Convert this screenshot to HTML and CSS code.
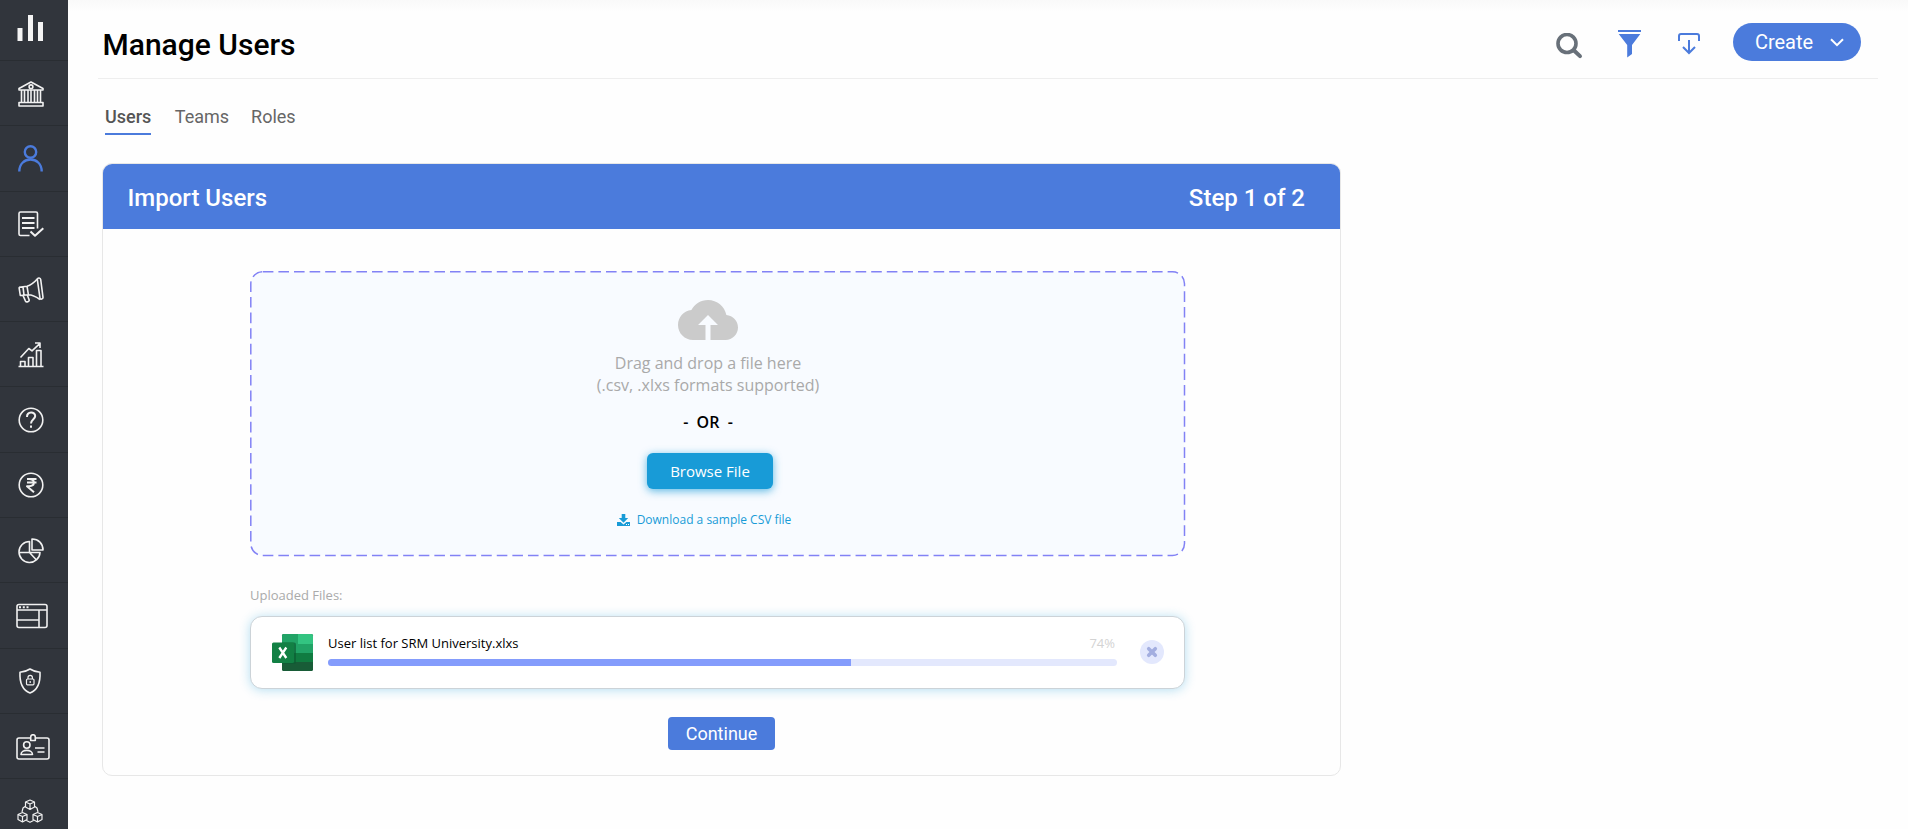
FILE: index.html
```html
<!DOCTYPE html>
<html lang="en">
<head>
<meta charset="utf-8">
<title>Manage Users</title>
<link rel="stylesheet" href="styles.css">
</head>
<body>
<div class="app">
  <nav class="sidebar">
    <a class="nav-item nav-logo"><svg width="27" height="27" viewBox="0 0 27 27"><path fill="#f4f4f4" d="M.5 13h5v13h-5zM11 0h5v26h-5zM21 7h5v19h-5z"/></svg></a>
    <a class="nav-item"><svg class="ico" width="26" height="26" viewBox="0 0 26 26"><path d="M1 9V7.500L13 1l12 6.500V9zM1 25v-3.500h24V25zM3.500 9.500v11.500M6.500 9.500v11.500M10 9.500v11.500M13 9.500v11.500M16.500 9.500v11.500M19.500 9.500v11.500M22.500 9.500v11.500"/><circle cx="13" cy="5.800" r="1.900"/></svg></a>
    <a class="nav-item"><svg class="ico active" width="26" height="27" viewBox="0 0 26 27"><circle cx="12.500" cy="7" r="5.700"/><path d="M1.300 26.500C1.300 10.500 23.700 10.500 23.700 26.500"/></svg></a>
    <a class="nav-item"><svg class="ico" width="26" height="26" viewBox="0 0 26 26"><path d="M11.500 24.500H2.500a1.500 1.500 0 0 1-1.500-1.500V2.500A1.500 1.500 0 0 1 2.500 1h15.500a1.500 1.500 0 0 1 1.500 1.500v15"/><path class="bold" d="M4 7h12.500M4 12h12.500M4 17h12.500M12.500 20.500l4.500 4.300 8.300-7.500"/></svg></a>
    <a class="nav-item"><svg class="ico" width="26" height="26" viewBox="0 0 26 26"><path d="M1 10.200l8-1c4-1 7-3.400 10.500-7.400M1 10.200l1.300 8.300 8.200-.8c4.500 0 7.500 2 11.500 4.800M5 9.800l1 8.200M9 9.200l1.400 8.500M5 18.500l2.500 5.600c.8 1.500 4.300.6 3.600-1.300L9.300 18"/><path d="M19.300 2.300c.4-2 3.200-1.500 3.400.2L25 20.300c.2 2-2.700 2.500-3 .8z"/></svg></a>
    <a class="nav-item"><svg class="ico" width="26" height="26" viewBox="0 0 26 26"><path d="M.5 24.500h25M2.500 24v-4.500h4.500V24M10.500 24v-8.500h4.500V24M18.500 24V8.500h4.500V24M2.500 15.500l8.300-9 3.200 2.300 7.500-7M17 1h5v5"/></svg></a>
    <a class="nav-item"><svg class="ico" width="26" height="26" viewBox="0 0 26 26"><circle cx="13" cy="13" r="11.800"/><path class="bold" d="M9 10c0-6 8.200-5.500 8.200-1 0 3-4.200 3.500-4.200 7.500M13 18.500v2.300"/></svg></a>
    <a class="nav-item"><svg class="ico" width="26" height="26" viewBox="0 0 26 26"><circle cx="13" cy="13" r="11.800"/><path class="bold" d="M9 7h9.500M9 10.600h9.500M11 7c6.500 0 6.500 7.200 0 7.200H9l7 6"/></svg></a>
    <a class="nav-item"><svg class="ico" width="26" height="26" viewBox="0 0 26 26"><path d="M11.500 3.500a10.500 10.500 0 1 0 10.500 11H11.500zM1 14.500h10.500l7 7.500M14 1v11h11C25 5.500 20.500 1 14 1z"/></svg></a>
    <a class="nav-item"><svg class="ico" width="32" height="26" viewBox="0 0 32 26"><rect x="1" y="1.500" width="30" height="23" rx="2"/><path d="M1 7h30M23 7v17.500M1 17h22"/><path class="bold" d="M3 4.300h2M6.800 4.300h2M10.500 4.300h2"/></svg></a>
    <a class="nav-item"><svg class="ico" width="26" height="26" viewBox="0 0 26 26"><path d="M13 1c3 2 6.300 3 10 3.200C23.500 14 20.500 22 13 25 5.500 22 2.500 14 3 4.200 6.700 4 10 3 13 1z"/><rect class="thin" x="9.500" y="11" width="7.500" height="5.800" rx="1"/><path class="thin" d="M11 11V9.500a2.200 2.200 0 0 1 4.400 0V11M13.200 13v2"/></svg></a>
    <a class="nav-item"><svg class="ico" width="34" height="26" viewBox="0 0 34 26"><path d="M14.500 4H3a2 2 0 0 0-2 2v17a2 2 0 0 0 2 2h28a2 2 0 0 0 2-2V6a2 2 0 0 0-2-2H19.500M14.700 6.500V3a2.300 2.300 0 0 1 4.600 0v3.500zM5 20.500c0-5.500 11.500-5.500 11.500 0zM19 14h9.500M21.500 18h7"/><circle cx="10.800" cy="11" r="3.200"/></svg></a>
    <a class="nav-item"><svg class="ico" width="26" height="26" viewBox="0 0 26 26"><path class="thin" d="M13 1l4.500 2v5L13 10.500 8.500 8V3zM8.500 3L13 5l4.500-2M13 5v5.500M5.500 13.500l4.500 2v5L5.500 23 1 20.500v-5zM1 15.500l4.500 2 4.500-2M5.500 17.500V23M20.500 13.500l4.500 2v5L20.500 23 16 20.500v-5zM16 15.500l4.500 2 4.500-2M20.500 17.500V23M8 7.500l-2 1.500-1 4M18 7.500L20 9l1 4M9.500 21.500l3.500 1.800 3.500-1.800"/></svg></a>
  </nav>
  <main class="main">
    <header class="topbar">
      <h1 class="title">Manage Users</h1>
      <div class="actions">
        <svg class="act-search" width="27" height="27" viewBox="0 0 27 27" fill="none" stroke="#687079"><circle cx="11" cy="10.500" r="9" stroke-width="3.600"/><path d="M18 17.500l6 5.600" stroke-width="4" stroke-linecap="round"/></svg>
        <svg class="act-filter" width="23" height="28" viewBox="0 0 23 28" fill="#4b7bdc"><path d="M0 0h23v2H0zM.7 4h21.600L14 15v9l-4.800 3.500V15z"/></svg>
        <svg class="act-import" width="22" height="22" viewBox="0 0 22 22" fill="none" stroke="#4b7bdc" stroke-width="2"><path d="M1 8V3q0-2 2-2h16q2 0 2 2v5M11 7v13M5 14l6 6 6-6"/></svg>
        <button class="create"><span>Create</span><svg width="14" height="9" viewBox="0 0 14 9" fill="none" stroke="#fff" stroke-width="2"><path d="M1 1.200l6 6 6-6"/></svg></button>
      </div>
    </header>
    <div class="tabs"><a class="tab tab-active">Users</a><a class="tab">Teams</a><a class="tab">Roles</a></div>
    <section class="card">
      <div class="card-head"><span>Import Users</span><span class="step">Step 1 of 2</span></div>
      <div class="card-body">
        <div class="drop">
          <svg class="drop-outline" width="936" height="286"><rect x=".8" y=".8" width="933.700" height="283.700" rx="12" fill="#f8fbff" stroke="#8282f5" stroke-width="1.500" stroke-dasharray="10.600 5"/></svg>
          <svg class="cloud" width="60" height="40" viewBox="0 4 24 16"><path fill="#cbcbcb" d="M19.350 10.040C18.670 6.590 15.640 4 12 4 9.110 4 6.600 5.640 5.350 8.040 2.340 8.360 0 10.910 0 14c0 3.310 2.690 6 6 6h5v-6H8l4-4 4 4h-3v6h6c2.760 0 5-2.240 5-5 0-2.640-2.050-4.780-4.650-4.960z"/></svg>
          <p class="hint">Drag and drop a file here<br><span>(.csv, .xlxs formats supported)</span></p>
          <p class="or">-&nbsp; OR &nbsp;-</p>
          <button class="browse">Browse File</button>
          <a class="sample"><svg width="13" height="12" viewBox="0 0 13 12" fill="#189bd7"><path d="M4.700 0h3.600v4h2.900L6.500 8.700 1.800 4h2.900z"/><path d="M0 8h3.600l2.900 2.600L9.400 8H13v4H0z"/><path fill="#fff" d="M9 10h1v1H9zM11 10h1v1h-1z"/></svg><span>Download a sample CSV file</span></a>
        </div>
        <div class="files-label"><span>Uploaded Files:</span></div>
        <div class="file">
          <svg class="excel" width="42" height="38" viewBox="0 0 42 38"><rect x="10" width="31" height="37" rx="1.500" fill="#185c37"/><path d="M11.500 0H26v10H10V1.500Q10 0 11.500 0zM26 10h15v9H26z" fill="#21a366"/><path d="M26 0h13.500Q41 0 41 1.500V10H26z" fill="#33c481"/><path d="M10 10h16v18H10zM26 19h15v9H26z" fill="#107c41"/><path d="M10 10h16v9H10z" fill="#21a366"/><path d="M10 8.500h12q2 0 2 2V28q0 2-2 2H10z" fill="#0c5a32" opacity=".65"/><rect y="8.500" width="22" height="20.500" rx="1.500" fill="#128044"/><path d="M7.300 13.500l7 10.500M14.300 13.500l-7 10.500" stroke="#fff" stroke-width="2.300"/></svg>
          <div class="progress">
            <div class="file-row"><span class="name">User list for SRM University.xlxs</span><span class="pct">74%</span></div>
            <div class="track"><div class="fill"></div></div>
          </div>
          <button class="remove"><svg width="12" height="12" viewBox="0 0 12 12"><path d="M2.700 2.700l6.600 6.600M9.300 2.700l-6.600 6.600" stroke="#a3aee0" stroke-width="3.600" stroke-linecap="round"/></svg></button>
        </div>
        <button class="continue">Continue</button>
      </div>
    </section>
  </main>
</div>
</body>
</html>
```
FILE: styles.css
```css
* { box-sizing: border-box; }
body { margin: 0; font-family: Roboto, sans-serif; background: #fefefe; overflow: hidden; }
h1, p { margin: 0; font-weight: inherit; }
button { border: 0; padding: 0; font: inherit; color: inherit; display: flex; align-items: center; justify-content: center; }
svg { display: block; flex: none; }
.app { display: flex; height: 829px; overflow: hidden; }
.sidebar { width: 68px; flex: none; background: #31353c; overflow: hidden; }
.nav-item { display: flex; align-items: center; height: 65.300px; padding: 1px 0 0 17.500px; border-bottom: 1px solid #292d32; }
.nav-logo { height: 61px; padding: 0 0 4px 17px; }
.nav-item:nth-child(n+10) { padding-left: 15.500px; }
.nav-item:nth-child(11), .nav-item:nth-child(13) { padding-left: 17px; }
.ico { fill: none; stroke: #f1f1f1; stroke-width: 1.600; stroke-linejoin: round; }
.ico.active { stroke: #4b7bdc; stroke-width: 2.400; }
.ico .bold { stroke-width: 2; }
.ico .thin { stroke-width: 1.200; }

.main { flex: 1; padding: 0 30px; background: linear-gradient(#f9f9f9, #fefefe 12px); }
.topbar { height: 79px; display: flex; justify-content: space-between; padding: 0 17px 0 4.500px; border-bottom: 1px solid #eee; }
.title { font-size: 30px; line-height: 36px; font-weight: 500; color: #000; margin-top: 27px; }
.actions { display: flex; align-items: flex-start; }
.act-search { margin: 33px 35px 0 0; }
.act-filter { margin: 30px 37px 0 0; }
.act-import { margin: 33px 33px 0 0; }
.create { width: 128px; height: 38px; margin-top: 23px; border-radius: 19px; background: #4b7bdc; color: #fff; font-size: 20px; gap: 17px; padding-left: 5px; }

.tabs { display: flex; height: 84px; padding: 25px 0 0 7px; font-size: 18px; line-height: 26px; color: #666; }
.tab { height: 31px; margin-right: 23.500px; }
.tab-active { color: #555; font-weight: 500; border-bottom: 2px solid #4b7bdc; }
.tab + .tab + .tab { margin-left: -1.500px; }

.card { width: 1239px; height: 613px; margin-left: 4px; border: 1px solid #e7e7e7; border-radius: 10px; overflow: hidden; background: #fefefe; }
.card-head { height: 65px; padding: 2px 35px 0 24.500px; background: #4b7bdc; color: #fff; font-size: 24px; font-weight: 500; display: flex; justify-content: space-between; align-items: center; }
.card-body { padding: 42px 155px 0 147px; display: flex; flex-direction: column; }
.drop { width: 936px; height: 286px; position: relative; display: flex; flex-direction: column; align-items: center; padding: 29px 20px 0 0; font-family: "Open Sans", sans-serif; }
.drop-outline { position: absolute; left: 0; top: 0; }
.drop > :not(.drop-outline) { position: relative; }
.hint { margin-top: 12px; font-size: 16px; line-height: 22px; color: #a9a9a9; text-align: center; }
.or { margin-top: 15px; font-size: 16px; line-height: 22px; font-weight: 600; color: #000; }
.browse { width: 126px; height: 36px; margin: 20px 0 0 4px; padding-bottom: 1px; border-radius: 6px; background: #189bd7; color: #fff; font-size: 15px; box-shadow: 0 2px 9px rgba(24,155,215,.7); }
.sample { display: flex; align-items: center; gap: 7px; margin: 22px 8px 0 0; font-size: 12px; line-height: 18px; color: #189bd7; }
.files-label { height: 59px; padding-top: 29px; font: 13px/18px "Open Sans", sans-serif; color: #aaa; }
.file { width: 935px; height: 73px; display: flex; align-items: center; padding-left: 21px; border: 1px solid #ccd3d8; border-radius: 12px; background: #fff; box-shadow: 0 1px 11px rgba(24,155,215,.32); font-family: "Open Sans", sans-serif; }
.progress { width: 789px; margin: 0 0 5px 14px; }
.file-row { display: flex; justify-content: space-between; padding-right: 2px; font-size: 13px; line-height: 18px; }
.name { color: #000; font-weight: 500; }
.pct { color: #d3d3d3; }
.track { height: 7px; margin-top: 7px; border-radius: 4px; background: #e3e8fd; overflow: hidden; }
.fill { width: 523px; height: 7px; background: #849cfc; }
.remove { width: 24px; height: 24px; margin: 0 0 2px 23px; border-radius: 50%; background: #e3e8fd; }
.continue { width: 107px; height: 33px; margin: 28px 0 0 418px; padding-bottom: 1px; border-radius: 4px; background: #4b7bdc; color: #fff; font-size: 18px; }
```
